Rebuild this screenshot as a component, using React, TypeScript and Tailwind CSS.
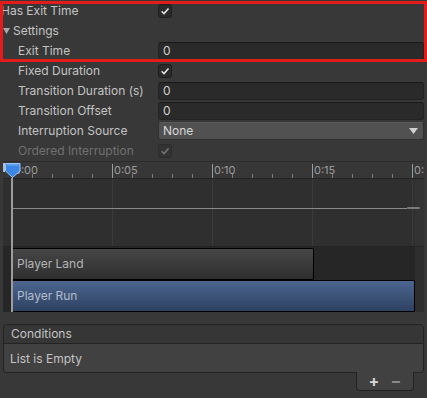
import React from 'react';

const ticks = Array.from({ length: 21 }, (_, i) => i);

function Check({ disabled }: { disabled?: boolean }) {
  return (
    <div
      className={`w-[14px] h-[14px] rounded-[3px] border flex items-center justify-center ${
        disabled ? 'bg-[#333333] border-[#2b2b2b]' : 'bg-[#2a2a2a] border-[#1e1e1e]'
      }`}
    >
      <svg width="10" height="10" viewBox="0 0 10 10">
        <path
          d="M1.6 5.3 L4 7.6 L8.5 2.4"
          fill="none"
          stroke={disabled ? '#777777' : '#e6e6e6'}
          strokeWidth="1.5"
        />
      </svg>
    </div>
  );
}

function Field({ value }: { value: string }) {
  return (
    <div className="h-[18px] rounded-[3px] bg-[#2a2a2a] border border-[#232323] border-t-[#191919] px-[4px] flex items-center text-[12px] text-[#d2d2d2]">
      {value}
    </div>
  );
}

function Row({
  label,
  children,
  indent = 18,
  disabled
}: {
  label: string;
  children?: React.ReactNode;
  indent?: number;
  disabled?: boolean;
}) {
  return (
    <div className="flex items-center h-[20px]">
      <div
        className={`w-[158px] shrink-0 text-[12px] whitespace-nowrap ${
          disabled ? 'text-[#707070]' : 'text-[#c4c4c4]'
        } ${indent === 18 ? 'pl-[18px]' : 'pl-[1px]'}`}
      >
        {label}
      </div>
      <div className="flex-1 mr-[3px]">{children}</div>
    </div>
  );
}

function Ruler() {
  return (
    <div className="relative h-[18px] bg-[#373737] border-t border-[#2c2c2c] border-b border-b-[#242424] overflow-hidden">
      {ticks.map((i) => {
        const left = 9 + i * 20;
        const major = i % 5 === 0;
        return (
          <div
            key={i}
            className={`absolute bottom-0 w-px ${major ? 'h-[14px] bg-[#9a9a9a]' : 'h-[4px] bg-[#7c7c7c]'}`}
            style={{ left }}
          />
        );
      })}
      {['0:00', '0:05', '0:10', '0:15', '0:20'].map((t, i) => (
        <div
          key={t}
          className="absolute top-[1px] text-[11px] leading-[14px] text-[#9c9c9c]"
          style={{ left: 11 + i * 100 }}
        >
          {t}
        </div>
      ))}
      <svg className="absolute left-[0px] top-[0px]" width="19" height="17" viewBox="0 0 19 17">
        <path d="M2.5 1.5 H17 V9 L9.5 15.5 L2.5 9 Z" fill="#3b86e6" stroke="#9cc6f6" strokeWidth="1" />
        <path d="M1 1 V10" stroke="#cfe3fa" strokeWidth="1.6" />
        <path d="M4 3 H15.5" stroke="#7fb6f2" strokeWidth="1" />
      </svg>
    </div>
  );
}

function Graph() {
  return (
    <div className="relative h-[68px] bg-[#2f2f2f] border-b border-[#242424]">
      {[109, 209, 309, 409].map((x) => (
        <div key={x} className="absolute top-0 bottom-0 w-px bg-[#3a3a3a]" style={{ left: x }} />
      ))}
      <div className="absolute top-0 bottom-0 left-[412px] right-0 bg-[#333333]" />
      <div className="absolute left-[9px] w-[395px] top-[29px] h-px bg-[#8a8a8a]" />
      <div className="absolute left-[404px] w-[13px] top-[28px] h-[2px] bg-[#7a7a7a] rounded-full" />
    </div>
  );
}

function Tracks() {
  return (
    <div className="relative bg-[#262626] pt-[1px] h-[65px]">
      <div className="absolute top-0 bottom-0 left-[412px] right-0 bg-[#2e2e2e]" />
      <div className="relative ml-[9px] w-[302px] h-[32px] border border-black bg-gradient-to-b from-[#464646] to-[#2f2f2f] flex items-center pl-[4px] text-[12px] text-[#b4b4b4]">
        Player Land
      </div>
      <div className="relative ml-[9px] w-[403px] h-[32px] border border-black bg-gradient-to-b from-[#4c6690] to-[#2e4262] flex items-center pl-[4px] text-[12px] text-[#b2bccb]">
        Player Run
      </div>
    </div>
  );
}

export default function App() {
  return (
    <div className="relative w-[427px] h-[398px] bg-[#383838] overflow-hidden font-['Inter','Noto_Sans',sans-serif] select-none">
      <div className="pt-[1px] flex flex-col">
        <Row label="Has Exit Time" indent={1}>
          <Check />
        </Row>
        <div className="flex items-center h-[20px] pl-[3px] gap-[3px] text-[12px] text-[#c4c4c4]">
          <svg width="7" height="6" viewBox="0 0 7 6">
            <path d="M0 0 H7 L3.5 6 Z" fill="#a8a8a8" />
          </svg>
          <span>Settings</span>
        </div>
        <Row label="Exit Time">
          <Field value="0" />
        </Row>
        <Row label="Fixed Duration">
          <Check />
        </Row>
        <Row label="Transition Duration (s)">
          <Field value="0" />
        </Row>
        <Row label="Transition Offset">
          <Field value="0" />
        </Row>
        <Row label="Interruption Source">
          <div className="h-[18px] rounded-[3px] bg-[#515151] border border-[#303030] border-t-[#5a5a5a] pl-[4px] pr-[5px] flex items-center justify-between text-[12px] text-[#d8d8d8]">
            <span>None</span>
            <svg width="9" height="6" viewBox="0 0 9 6">
              <path d="M0 0 H9 L4.5 6 Z" fill="#d0d0d0" />
            </svg>
          </div>
        </Row>
        <Row label="Ordered Interruption" disabled>
          <Check disabled />
        </Row>
      </div>

      <div className="relative mx-[3px] overflow-hidden">
        <Ruler />
        <Graph />
        <Tracks />
        <div className="absolute left-[8px] top-[17px] w-[2px] h-[134px] bg-[#9c9c9c]" />
      </div>

      <div className="mt-[12px] mx-[3px] w-[421px]">
        <div className="h-[20px] rounded-t-[4px] border border-[#232323] bg-[#363636] flex items-center pl-[7px] text-[12px] text-[#c4c4c4]">
          Conditions
        </div>
        <div className="h-[29px] rounded-b-[4px] border border-t-0 border-[#232323] bg-[#414141] flex items-center pl-[6px] pt-[2px] text-[12px] text-[#c4c4c4]">
          List is Empty
        </div>
        <div className="flex justify-end pr-[10px]">
          <div className="-mt-[1px] w-[58px] h-[19px] rounded-b-[4px] border border-t-0 border-[#232323] bg-[#414141] flex items-center justify-around px-[6px]">
            <span className="text-[16px] leading-none font-bold text-[#d6d6d6]">+</span>
            <span className="text-[16px] leading-none font-bold text-[#8a8a8a]">−</span>
          </div>
        </div>
      </div>

      <div className="absolute left-0 top-[1px] w-[427px] h-[61px] border-[3px] border-[#e21b1b] pointer-events-none" />
    </div>
  );
}
